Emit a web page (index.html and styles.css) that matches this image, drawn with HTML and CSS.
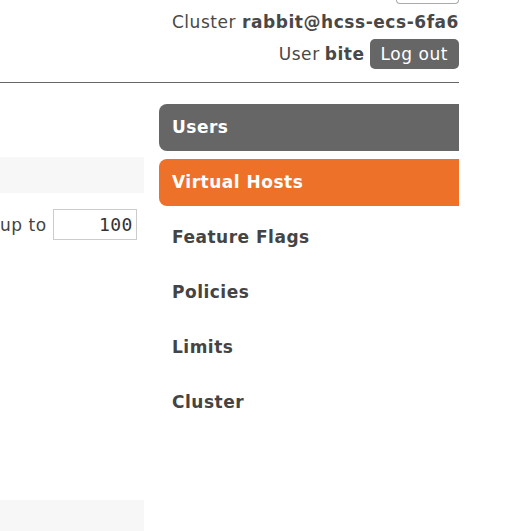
FILE: index.html
```html
<!DOCTYPE html>
<html>
<head>
<meta charset="utf-8">
<link rel="stylesheet" href="styles.css">
</head>
<body>
<div class="page">
  <header class="header">
    <div class="refresh"></div>
    <div class="line cluster">Cluster <b>rabbit@hcss-ecs-6fa6</b></div>
    <div class="line user">User <b>bite</b> <button class="logout">Log out</button></div>
  </header>
  <div class="main">
    <section class="content">
      <div class="band"></div>
      <div class="pager">up to <input class="num" type="text" value="100"></div>
      <div class="spacer"></div>
      <div class="band bottom"></div>
    </section>
    <nav class="menu">
      <a class="item sel-user">Users</a>
      <a class="item active">Virtual Hosts</a>
      <a class="item">Feature Flags</a>
      <a class="item">Policies</a>
      <a class="item">Limits</a>
      <a class="item">Cluster</a>
    </nav>
  </div>
</div>
</body>
</html>
```
FILE: styles.css
```css
html, body { margin: 0; padding: 0; background: #fff; }
body { font-family: "DejaVu Sans", Verdana, sans-serif; font-size: 17px; letter-spacing: 0.55px; color: #484848; overflow: hidden; height: 531px; }
.page { width: 459px; }
.header { display: flex; flex-direction: column; align-items: flex-end; border-bottom: 1px solid #666; height: 83px; box-sizing: border-box; }
.refresh { width: 61px; height: 3px; border: 1px solid #aaa; border-top: none; border-radius: 0 0 4px 4px; }
.line { line-height: 22px; }
.cluster { margin-top: 7px; }
.user { margin-top: 6px; display: flex; align-items: center; gap: 5px; }
.logout { font-family: "DejaVu Sans", Verdana, sans-serif; font-size: 17px; letter-spacing: 0.55px; color: #fff; background: #666; border: none; border-radius: 5px; height: 30px; padding: 0 11px; margin: 0; }
.main { display: flex; gap: 15px; margin-top: 21px; }
.content { width: 144px; flex: none; display: flex; flex-direction: column; }
.band { background: #f7f7f7; height: 36px; margin-top: 53px; }
.band.bottom { margin-top: 0; height: 40px; }
.pager { display: flex; align-items: center; gap: 6px; margin-top: 16px; color: #444; }
.num { width: 84px; height: 31px; box-sizing: border-box; border: 1px solid #ccc; font-family: "DejaVu Sans Mono", monospace; font-size: 18px; letter-spacing: 0.4px; text-align: right; padding: 0 3px; color: #333; margin: 0; }
.spacer { height: 260px; }
.menu { flex: 1; display: flex; flex-direction: column; gap: 8px; }
.item { display: block; height: 47px; line-height: 47px; padding-left: 13px; font-weight: bold; font-size: 17px; letter-spacing: 0.5px; color: #444; border-radius: 8px 0 0 8px; }
.sel-user { background: #666; color: #fff; }
.active { background: #ed7128; color: #fff; }
```
